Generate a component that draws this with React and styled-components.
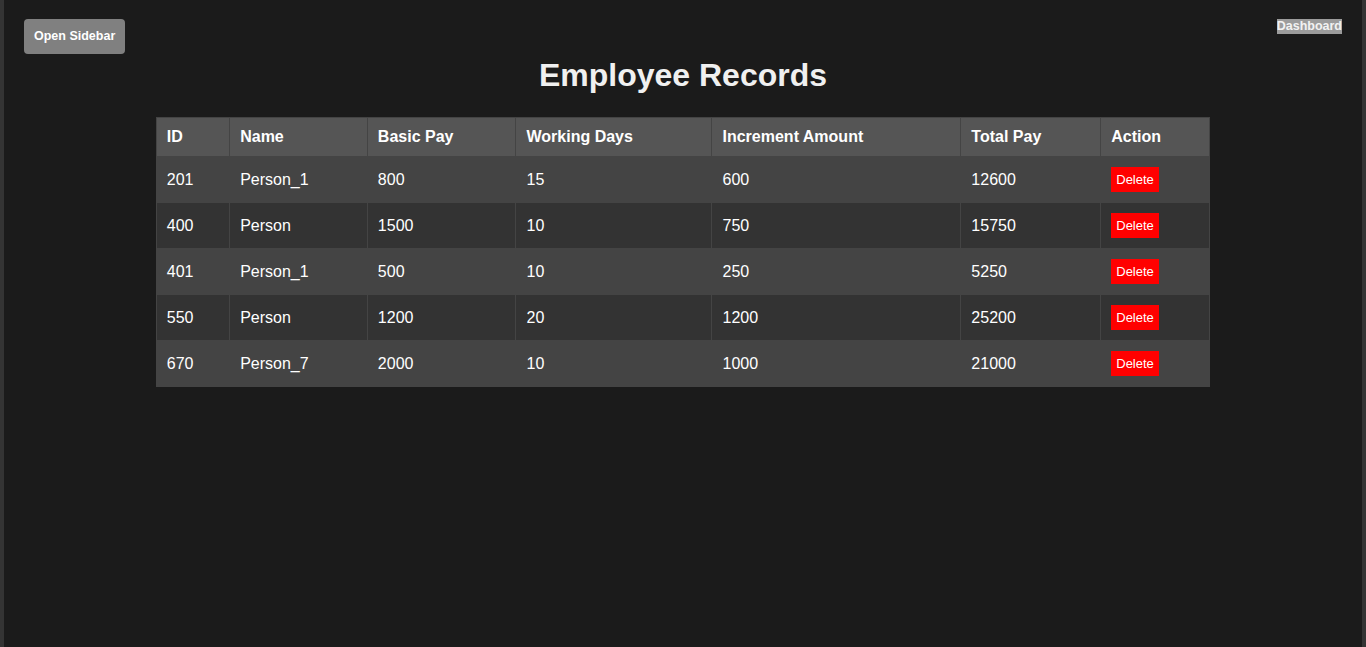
import React, { useState } from 'react';
import styled, { createGlobalStyle } from 'styled-components';

const GlobalStyle = createGlobalStyle`
  html, body {
    margin: 0;
    padding: 0;
    background: #1b1b1b;
  }
  * {
    box-sizing: border-box;
  }
`;

const Page = styled.div`
  min-height: 100vh;
  background: #1b1b1b;
  border-left: 4px solid #343434;
  border-right: 4px solid #343434;
  padding: 19px 20px 20px;
  font-family: "Liberation Sans", Arial, sans-serif;
  color: #f0f0f0;
`;

const TopBar = styled.div`
  display: flex;
  justify-content: space-between;
  align-items: flex-start;
`;

const SidebarButton = styled.button`
  background: #808080;
  color: #fff;
  border: none;
  border-radius: 4px;
  padding: 10px;
  font-family: inherit;
  font-size: 12.5px;
  font-weight: bold;
  line-height: 15px;
  cursor: pointer;
`;

const NavLink = styled.a`
  background: #9c9c9c;
  color: #f2f2f2;
  font-size: 12.5px;
  font-weight: bold;
  line-height: 15px;
  text-decoration: none;
  cursor: pointer;
`;

const Title = styled.h1`
  text-align: center;
  font-size: 32px;
  font-weight: bold;
  margin: 3px 0 23px;
  color: #f0f0f0;
`;

const Table = styled.table`
  width: 80%;
  margin: 0 auto;
  border-collapse: collapse;
  font-size: 16px;
  color: #fff;
`;

const HeadCell = styled.th`
  background: #555;
  border: 1px solid #444;
  padding: 10px;
  text-align: left;
  font-weight: bold;
  line-height: 18px;
`;

const Row = styled.tr`
  background: ${(p) => (p.$odd ? '#444' : '#333')};
`;

const Cell = styled.td`
  border: 1px solid #444;
  padding: 10px;
  line-height: 24px;
  height: 45px;
  vertical-align: middle;
`;

const DeleteButton = styled.button`
  display: block;
  background: #ff0000;
  color: #fff;
  border: none;
  padding: 5px;
  font-family: inherit;
  font-size: 13px;
  line-height: 15px;
  cursor: pointer;
`;

const initialRecords = [
  { id: 201, name: 'Person_1', basic: 800, days: 15, increment: 600, total: 12600 },
  { id: 400, name: 'Person', basic: 1500, days: 10, increment: 750, total: 15750 },
  { id: 401, name: 'Person_1', basic: 500, days: 10, increment: 250, total: 5250 },
  { id: 550, name: 'Person', basic: 1200, days: 20, increment: 1200, total: 25200 },
  { id: 670, name: 'Person_7', basic: 2000, days: 10, increment: 1000, total: 21000 },
];

const columns = ['ID', 'Name', 'Basic Pay', 'Working Days', 'Increment Amount', 'Total Pay', 'Action'];

const App = () => {
  const [records, setRecords] = useState(initialRecords);

  const removeRecord = (id) => {
    setRecords(records.filter((r) => r.id !== id));
  };

  return (
    <>
      <GlobalStyle />
      <Page>
        <TopBar>
          <SidebarButton>Open Sidebar</SidebarButton>
          <NavLink>Dashboard</NavLink>
        </TopBar>
        <Title>Employee Records</Title>
        <Table>
          <thead>
            <tr>
              {columns.map((c) => (
                <HeadCell key={c}>{c}</HeadCell>
              ))}
            </tr>
          </thead>
          <tbody>
            {records.map((r, i) => (
              <Row key={r.id} $odd={i % 2 === 0}>
                <Cell>{r.id}</Cell>
                <Cell>{r.name}</Cell>
                <Cell>{r.basic}</Cell>
                <Cell>{r.days}</Cell>
                <Cell>{r.increment}</Cell>
                <Cell>{r.total}</Cell>
                <Cell>
                  <DeleteButton onClick={() => removeRecord(r.id)}>Delete</DeleteButton>
                </Cell>
              </Row>
            ))}
          </tbody>
        </Table>
      </Page>
    </>
  );
};

export default App;
